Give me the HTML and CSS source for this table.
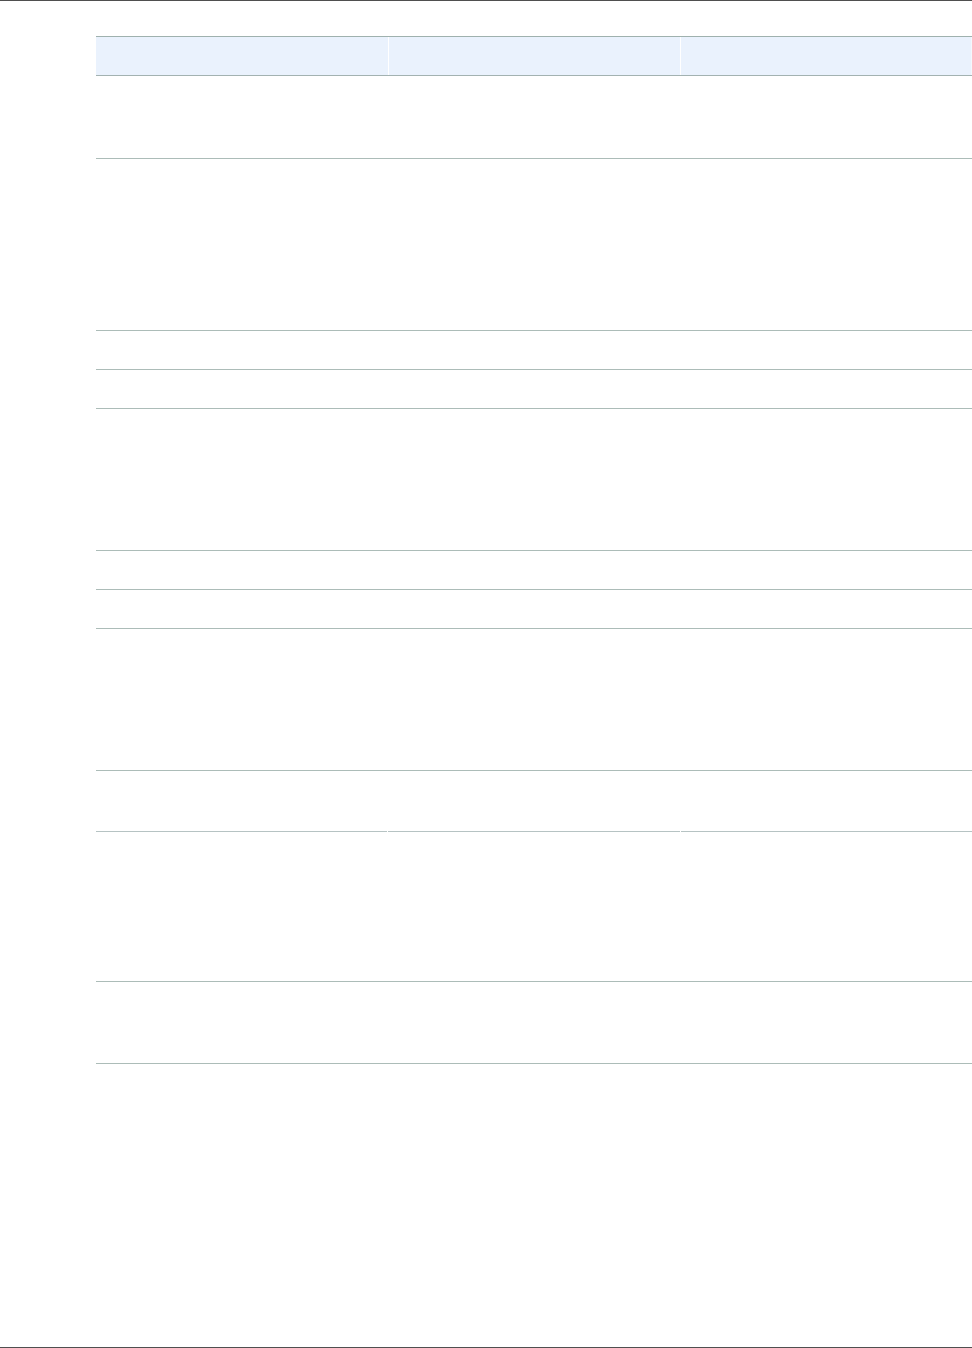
FILE: index.html
```html
<!DOCTYPE html>
<html lang="en">
  <head>
    <meta charset="UTF-8" />
    <meta name="viewport" content="width=device-width, initial-scale=1.0" />
    <title>Table</title>
    <link rel="stylesheet" href="styles.css">
  </head>
  <body>
    <div class="page">
      <div class="table">
        <div class="row head">
          <div class="cell"></div>
          <div class="cell"></div>
          <div class="cell"></div>
        </div>
        <div class="row h83"><div></div><div></div><div></div></div>
        <div class="row h172"><div></div><div></div><div></div></div>
        <div class="row h39"><div></div><div></div><div></div></div>
        <div class="row h39"><div></div><div></div><div></div></div>
        <div class="row h142"><div></div><div></div><div></div></div>
        <div class="row h39"><div></div><div></div><div></div></div>
        <div class="row h39"><div></div><div></div><div></div></div>
        <div class="row h142"><div></div><div></div><div></div></div>
        <!-- this one is drawn per cell, small gaps between columns -->
        <div class="row h61 split"><div></div><div></div><div></div></div>
        <div class="row h150"><div></div><div></div><div></div></div>
        <div class="row h82"><div></div><div></div><div></div></div>
      </div>
    </div>
  </body>
</html>
```

FILE: styles.css
```css
body {
  font-family: "Liberation Sans", Arial, sans-serif;
  background-color: #fff;
  margin: 0;
  padding: 0;
}

.page {
  height: 1348px;
  box-sizing: border-box;
  border-top: 1px solid #4f4f4f;
  border-bottom: 1px solid #4f4f4f;
  padding-top: 35px;
  padding-left: 96px;
  overflow: hidden;
}

.table {
  width: 876px;
}

.row {
  display: grid;
  grid-template-columns: repeat(3, 1fr);
  box-sizing: border-box;
  border-bottom: 1px solid #acbcb8;
}

.head {
  height: 40px;
  border-top: 1px solid #9fb1ae;
  border-bottom: 1px solid #a3b2b1;
  background-color: #eaf2fd;
}

.head .cell + .cell {
  border-left: 1px solid #fff;
}

.head .cell:last-child {
  border-right: 1px solid #f4f8fd;
}

.split {
  border-bottom: none;
  column-gap: 1px;
}

.split div {
  border-bottom: 1px solid #b6c3c3;
}

.h39 { height: 39px; }
.h61 { height: 61px; }
.h82 { height: 82px; }
.h83 { height: 83px; }
.h142 { height: 142px; }
.h150 { height: 150px; }
.h172 { height: 172px; }
```
